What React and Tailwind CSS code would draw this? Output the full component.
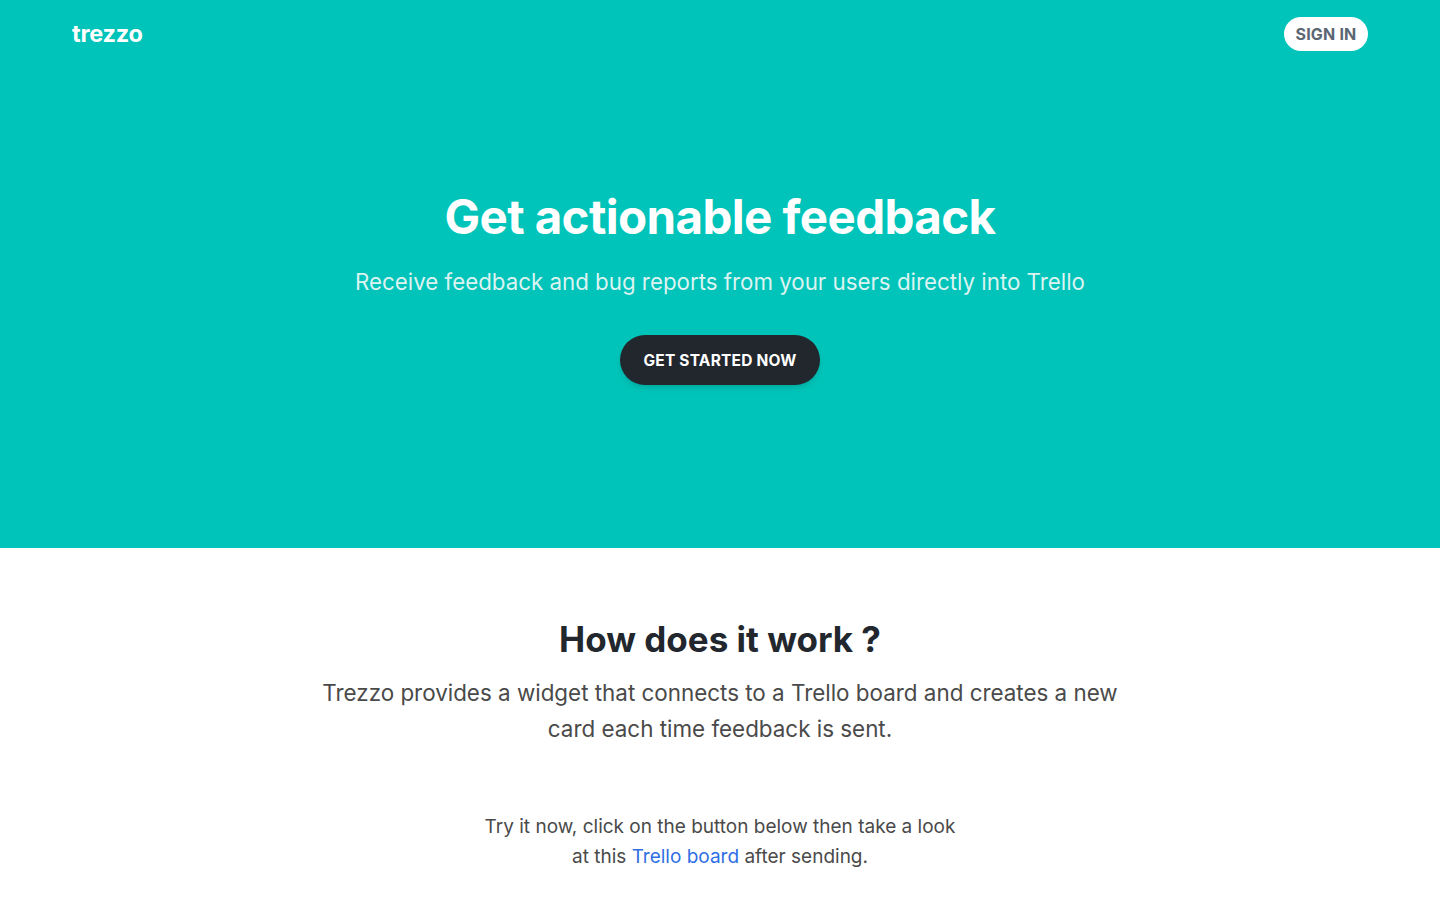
export default function App() {
  return (
    <div className="min-h-screen bg-white font-['Inter','Liberation_Sans',sans-serif]">
      <section className="bg-[#00c4b9] h-[548px] flex flex-col">
        <nav className="flex items-center justify-between px-[72px] pt-[16px]">
          <a href="#" className="text-white text-[23.5px] font-bold tracking-[-0.2px]">trezzo</a>
          <button className="bg-white text-[#5b6673] text-[16px] font-bold rounded-full h-[34px] w-[84px] tracking-[0.2px]">
            SIGN IN
          </button>
        </nav>
        <div className="flex flex-col items-center text-center pt-[137px]">
          <h1 className="text-white text-[47.5px] font-bold tracking-[-0.6px] leading-[1.2]">
            Get actionable feedback
          </h1>
          <p className="text-[#dcf3f1] text-[22.3px] mt-[21px] leading-[1.4]">
            Receive feedback and bug reports from your users directly into Trello
          </p>
          <button className="mt-[38px] bg-[#22272e] text-white text-[15.5px] font-bold rounded-full h-[50px] w-[200px] shadow-md tracking-[0.2px]">
            GET STARTED NOW
          </button>
        </div>
      </section>
      <section className="flex flex-col items-center text-center mt-[69px]">
        <h2 className="text-[#22272e] text-[35px] font-bold leading-[1.3]">How does it work ?</h2>
        <p className="text-[#4a4a4a] text-[22.4px] leading-[36px] max-w-[820px] mt-[12px]">
          Trezzo provides a widget that connects to a Trello board and creates a new card each time feedback is sent.
        </p>
        <p className="text-[#4a4a4a] text-[19px] leading-[30px] max-w-[480px] mt-[65px]">
          Try it now, click on the button below then take a look at this{" "}
          <a href="#" className="text-[#2f6fe4]">Trello board</a> after sending.
        </p>
      </section>
    </div>
  )
}
